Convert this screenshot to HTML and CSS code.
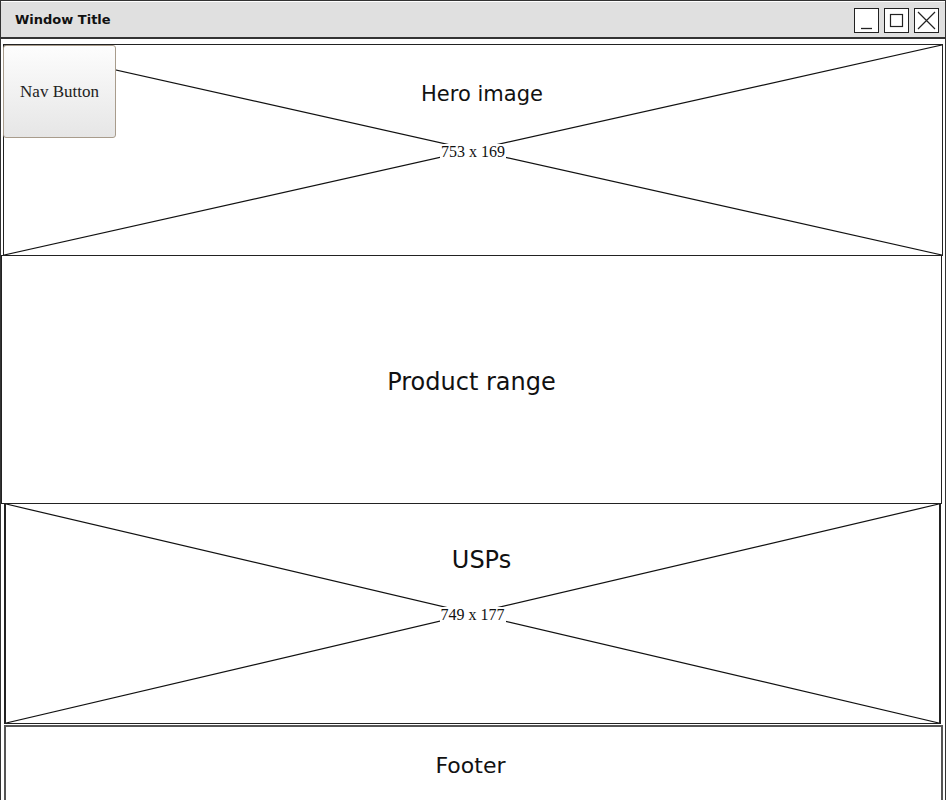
FILE: index.html
```html
<!DOCTYPE html>
<html lang="en">
<head>
    <meta charset="UTF-8">
    <meta name="viewport" content="width=device-width, initial-scale=1.0">
    <title>Wireframe</title>
    <link rel="stylesheet" href="styles.css">
</head>
<body>

    <div class="window">

        <div class="titlebar">
            <span class="title">Window Title</span>
            <div class="controls">
                <div class="ctrl">
                    <svg width="23" height="23" viewBox="0 0 23 23"><line x1="6" y1="19.5" x2="17" y2="19.5" stroke="#222" stroke-width="1.3"/></svg>
                </div>
                <div class="ctrl">
                    <svg width="23" height="23" viewBox="0 0 23 23"><rect x="5.5" y="5.5" width="12" height="12" fill="none" stroke="#222" stroke-width="1.2"/></svg>
                </div>
                <div class="ctrl">
                    <svg width="23" height="23" viewBox="0 0 23 23"><path d="M3 3 L20 20 M20 3 L3 20" stroke="#222" stroke-width="1.2"/></svg>
                </div>
            </div>
        </div>

        <div class="block hero">
            <svg class="cross" viewBox="0 0 100 100" preserveAspectRatio="none">
                <line x1="0" y1="0" x2="100" y2="100"/>
                <line x1="0" y1="100" x2="100" y2="0"/>
            </svg>
            <div class="label">Hero image</div>
            <div class="size">753 x 169</div>
            <button class="nav">Nav Button</button>
        </div>

        <div class="block product">
            <div class="label big">Product range</div>
        </div>

        <div class="block usps">
            <svg class="cross" viewBox="0 0 100 100" preserveAspectRatio="none">
                <line x1="0" y1="0" x2="100" y2="100"/>
                <line x1="0" y1="100" x2="100" y2="0"/>
            </svg>
            <div class="label big">USPs</div>
            <div class="size">749 x 177</div>
        </div>

        <div class="block footer">
            <div class="label">Footer</div>
        </div>

    </div>

</body>
</html>
```

FILE: styles.css
```css
body{
    margin: 0px;
    background: white;
    font-family: "Comic Sans MS", "DejaVu Sans", sans-serif;
    color: #111;
}

.window{
    width: 946px;
    height: 800px;
    border: 1px solid #333;
    border-bottom: none;
    overflow: hidden;
    box-sizing: border-box;
}

.titlebar{
    height: 37px;
    background: #e0e0e0;
    border-bottom: 2px solid #333;
    display: flex;
    align-items: center;
    justify-content: space-between;
    padding-left: 14px;
    padding-right: 6px;
    box-sizing: border-box;
    margin-top: 1px;
}

.title{
    font-size: 13px;
    font-weight: bold;
}

.controls{
    display: flex;
    gap: 5px;
    margin-top: 1px;
}

.ctrl{
    width: 23px;
    height: 23px;
    border: 1px solid #222;
    background: white;
}

.ctrl svg{
    display: block;
}

.block{
    position: relative;
    border: 1px solid #222;
    display: flex;
    flex-direction: column;
    align-items: center;
    box-sizing: border-box;
}

.cross{
    position: absolute;
    inset: 0;
    width: 100%;
    height: 100%;
}

.cross line{
    stroke: #111;
    stroke-width: 1.2;
    vector-effect: non-scaling-stroke;
}

.label{
    position: relative;
    font-size: 21px;
    background: white;
    line-height: 1.2;
}

.big{
    font-size: 24px;
}

.size{
    position: relative;
    font-family: "Liberation Serif", serif;
    font-size: 16px;
    background: white;
    line-height: 1;
    padding: 0 1px;
}

.hero{
    margin-top: 5px;
    margin-left: 2px;
    width: 940px;
    height: 212px;
    padding-top: 37px;
}

.hero .label{
    margin-left: 18px;
    background: none;
}

.hero .size{
    margin-top: 37px;
}

.nav{
    position: absolute;
    left: -1px;
    top: 0px;
    width: 113px;
    height: 93px;
    border: 1px solid #a89c8c;
    border-radius: 3px;
    background: linear-gradient(#fdfdfd, #e6e6e6);
    font-family: "Liberation Serif", serif;
    font-size: 17px;
    color: #222;
    padding: 0;
}

.product{
    width: 941px;
    height: 249px;
    margin-top: -1px;
    padding-top: 5px;
    justify-content: center;
}

.usps{
    margin-left: 3px;
    width: 937px;
    height: 221px;
    margin-top: -1px;
    padding-top: 42px;
    border-width: 1px 2px 1px 2px;
}

.usps .label{
    margin-left: 18px;
    background: none;
}

.usps .size{
    margin-top: 32px;
}

.footer{
    margin-left: 3px;
    width: 939px;
    height: 80px;
    margin-top: 1px;
    padding-top: 26px;
    border-width: 2px 2px 0 2px;
    border-color: #555;
}

.footer .label{
    margin-left: -6px;
    font-size: 22px;
}
```
